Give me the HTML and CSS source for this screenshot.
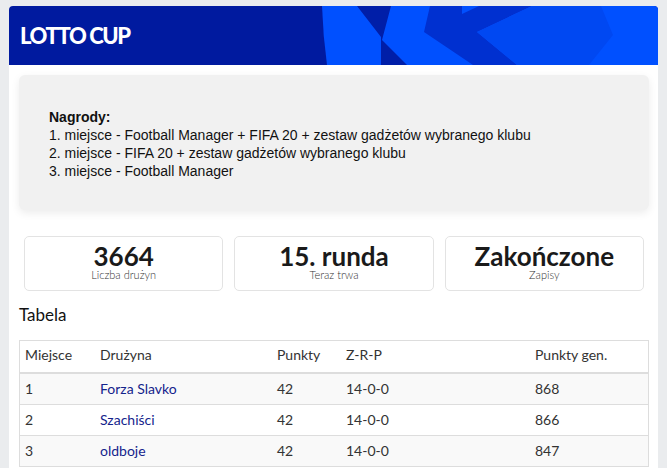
FILE: index.html
```html
<!DOCTYPE html>
<html>
  <head>
    <meta charset="UTF-8">
    <title>Lotto Cup</title>
    <meta name="viewport" content="width=device-width, initial-scale=1.0">
    <link rel="stylesheet" href="styles.css">
  </head>
  <body>
    <div class="card">
      <div class="header">
        <svg class="header-art" viewBox="0 0 358 59" preserveAspectRatio="none">
          <path d="M13,0 Q14,30 18,59 L358,59 L358,0 Z" fill="#0050ff"/>
          <polygon points="48,0 82,0 73,34 98,59 72,59 72,31" fill="#001ea8"/>
          <polygon points="121,0 223,0 168,26 208,59 164,59 115,26" fill="#0030d0"/>
          <polygon points="153,0 170,0 153,8" fill="#0050ff"/>
          <polygon points="223,0 292,0 304,29 280,59 208,59 168,26" fill="#0048f2"/>
        </svg>
        <div class="logo">LOTTO CUP</div>
      </div>

      <div class="content">
        <div class="prizes">
          <p><strong>Nagrody:</strong><br>
          1. miejsce - Football Manager + FIFA 20 + zestaw gadżetów wybranego klubu<br>
          2. miejsce - FIFA 20 + zestaw gadżetów wybranego klubu<br>
          3. miejsce - Football Manager</p>
        </div>

        <div class="stats">
          <div class="stat">
            <div class="stat-value">3664</div>
            <div class="stat-label">Liczba drużyn</div>
          </div>
          <div class="stat">
            <div class="stat-value">15. runda</div>
            <div class="stat-label">Teraz trwa</div>
          </div>
          <div class="stat">
            <div class="stat-value">Zakończone</div>
            <div class="stat-label">Zapisy</div>
          </div>
        </div>

        <h3 class="section-title">Tabela</h3>
        <table class="table">
          <thead>
            <tr>
              <th class="col-place">Miejsce</th>
              <th class="col-team">Drużyna</th>
              <th class="col-pts">Punkty</th>
              <th class="col-wdl">Z-R-P</th>
              <th>Punkty gen.</th>
            </tr>
          </thead>
          <tbody>
            <tr>
              <td>1</td>
              <td><a href="#">Forza Slavko</a></td>
              <td>42</td>
              <td>14-0-0</td>
              <td>868</td>
            </tr>
            <tr>
              <td>2</td>
              <td><a href="#">Szachiści</a></td>
              <td>42</td>
              <td>14-0-0</td>
              <td>866</td>
            </tr>
            <tr>
              <td>3</td>
              <td><a href="#">oldboje</a></td>
              <td>42</td>
              <td>14-0-0</td>
              <td>847</td>
            </tr>
          </tbody>
        </table>
      </div>
    </div>
  </body>
</html>
```

FILE: styles.css
```css
body {
  margin: 0;
  padding: 6px 9px 0;
  background-color: #eaecee;
  font-family: Lato, "Noto Sans", sans-serif;
  color: #333;
}
.card {
  background-color: white;
  border-radius: 4px 4px 0 0;
  overflow: hidden;
  min-height: 462px;
}
.header {
  position: relative;
  height: 59px;
  background-color: #001a9f;
  display: flex;
  align-items: center;
  padding-left: 11px;
  overflow: hidden;
}
.header-art {
  position: absolute;
  top: 0;
  left: 300px;
  width: 358px;
  height: 59px;
}
.logo {
  position: relative;
  color: white;
  font-weight: 900;
  font-size: 22px;
  letter-spacing: -1.4px;
}
.content {
  padding: 10px 9px 0 10px;
}
.prizes {
  background-color: #f1f1f1;
  border-radius: 6px;
  box-shadow: 0 3px 8px rgba(0, 0, 0, 0.08);
  padding: 33px 30px 30px;
}
.prizes p {
  margin: 0;
  font-family: "Liberation Sans", Arial, sans-serif;
  font-size: 14px;
  line-height: 18px;
  color: #111;
}
.stats {
  display: flex;
  gap: 11px;
  margin: 26px 5px 0;
}
.stat {
  flex: 1;
  border: 1px solid #e3e3e3;
  border-radius: 5px;
  text-align: center;
  padding: 6px 0 9px;
}
.stat-value {
  font-size: 26px;
  font-weight: bold;
  line-height: 26px;
  color: #1a1a1a;
}
.stat-label {
  font-size: 11px;
  font-weight: 300;
  line-height: 12px;
  color: #333;
}
.section-title {
  margin: 14px 0 15px;
  font-size: 17px;
  font-weight: normal;
  line-height: 20px;
  color: #111;
}
.table {
  width: 100%;
  border-collapse: collapse;
  border: 1px solid #ddd;
  font-size: 14px;
}
.table th,
.table td {
  text-align: left;
  padding: 5px 5px;
  line-height: 20px;
}
.table th {
  font-weight: normal;
  padding: 4px 5px 7px;
  border-bottom: 2px solid #ddd;
}
.table td {
  border-top: 1px solid #ddd;
}
.table tbody tr:nth-child(odd) {
  background-color: #f9f9f9;
}
.table a {
  color: #14248c;
  text-decoration: none;
}
.col-place {
  width: 65px;
}
.col-team {
  width: 167px;
}
.col-pts {
  width: 59px;
}
.col-wdl {
  width: 179px;
}
```
